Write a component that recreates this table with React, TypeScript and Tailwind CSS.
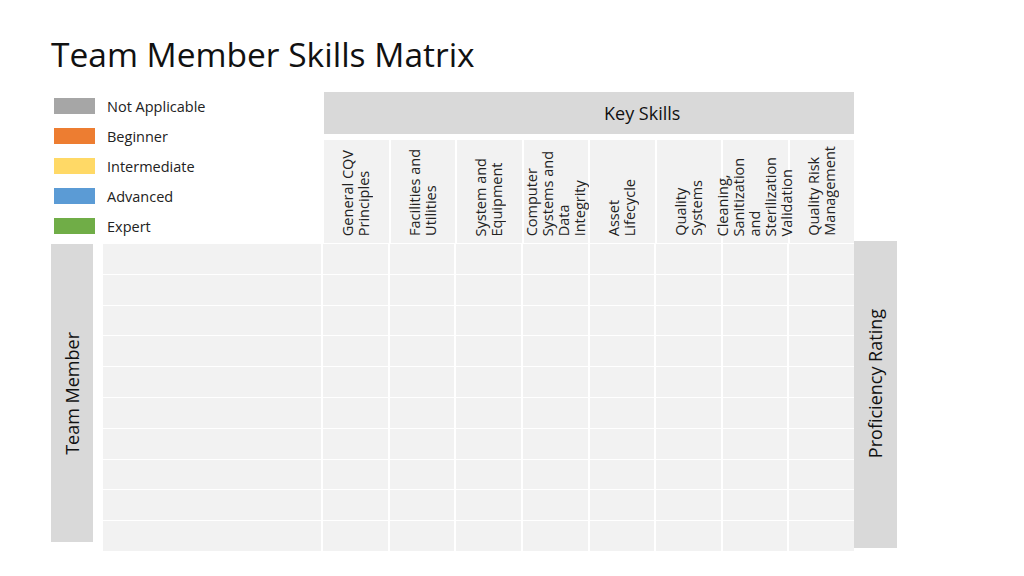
const legend = [
  { label: 'Not Applicable', color: 'bg-[#a6a6a6]' },
  { label: 'Beginner', color: 'bg-[#ed7d31]' },
  { label: 'Intermediate', color: 'bg-[#ffd966]' },
  { label: 'Advanced', color: 'bg-[#5b9bd5]' },
  { label: 'Expert', color: 'bg-[#70ad47]' },
];

const skills = [
  ['General CQV', 'Principles'],
  ['Facilities and', 'Utilities'],
  ['System and', 'Equipment'],
  ['Computer', 'Systems and', 'Data', 'Integrity'],
  ['Asset', 'Lifecycle'],
  ['Quality', 'Systems'],
  ['Cleaning,', 'Sanitization', 'and', 'Sterilization', 'Validation'],
  ['Quality Risk', 'Management'],
];

const rows = Array.from({ length: 10 });
const cols = Array.from({ length: 9 });

export default function App() {
  return (
    <div className="w-[1024px] h-[576px] bg-white text-[#111] font-['Open_Sans',sans-serif] overflow-hidden">
      {/* Title */}
      <div className="h-[92px] pl-[51px] pt-[32px]">
        <h1 className="text-[33.5px] leading-[44px]">Team Member Skills Matrix</h1>
      </div>

      <div className="flex pl-[51px]">
        <div className="w-[803px]">
          {/* Legend + skill headers */}
          <div className="flex h-[152px]">
            <div className="w-[273px] pl-[3px] pt-[6px] flex flex-col gap-[14px]">
              {legend.map((item) => (
                <div key={item.label} className="flex items-center gap-[12px] h-[16px]">
                  <div className={`w-[41px] h-[16px] ${item.color}`}></div>
                  <span className="text-[14.5px] leading-[16px] text-[#222] pt-[1px]">{item.label}</span>
                </div>
              ))}
            </div>
            <div className="w-[530px]">
              <div className="h-[42px] bg-[#d9d9d9] flex items-center pl-[280px]">
                <span className="text-[18px] text-[#111]">Key Skills</span>
              </div>
              <div className="mt-[6px] h-[103px] grid grid-cols-8 gap-x-[2px]">
                {skills.map((lines, idx) => (
                  <div key={idx} className="bg-[#f2f2f2] flex items-end justify-center pb-[7px]">
                    <div className="[writing-mode:vertical-rl] rotate-180 text-[14.5px] leading-[16px] whitespace-nowrap text-[#222]">
                      {lines.map((l, i) => (
                        <span key={i}>
                          {l}
                          {i < lines.length - 1 && <br />}
                        </span>
                      ))}
                    </div>
                  </div>
                ))}
              </div>
            </div>
          </div>

          {/* Team member bar + grid */}
          <div className="flex">
            <div className="w-[42px] h-[298px] bg-[#d9d9d9] flex items-center justify-center">
              <span className="[writing-mode:vertical-rl] rotate-180 text-[18px] whitespace-nowrap">Team Member</span>
            </div>
            <div className="ml-[10px] w-[751px] h-[307px] grid grid-cols-[218px_repeat(8,minmax(0,1fr))] grid-rows-10 gap-x-[2px] gap-y-px">
              {rows.map((_, r) =>
                cols.map((_, c) => <div key={`${r}-${c}`} className="bg-[#f2f2f2]"></div>)
              )}
            </div>
          </div>
        </div>

        {/* Proficiency bar */}
        <div className="mt-[149px] w-[43px] h-[307px] bg-[#d9d9d9] flex items-center justify-center pb-[22px]">
          <span className="[writing-mode:vertical-rl] rotate-180 text-[18px] whitespace-nowrap">Proficiency Rating</span>
        </div>
      </div>
    </div>
  );
}
